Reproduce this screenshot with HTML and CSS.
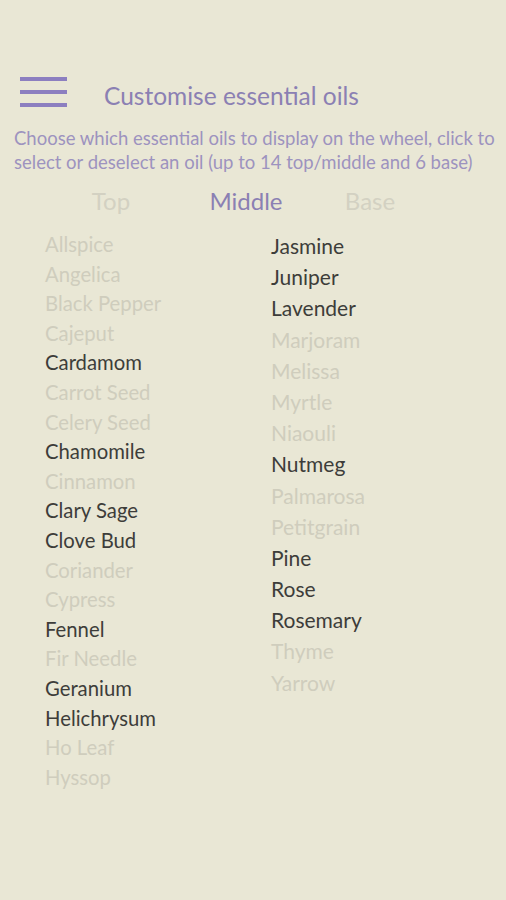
FILE: index.html
```html
<!DOCTYPE html>
<html lang="en">
<head>
  <meta charset="UTF-8" />
  <meta name="viewport" content="width=device-width, initial-scale=1.0" />
  <title>Customise essential oils</title>
  <link rel="stylesheet" href="styles.css">
</head>
<body>
  <div class="screen">
    <header class="bar">
      <span class="menu"><i></i><i></i><i></i></span>
      <h1>Customise essential oils</h1>
    </header>
    <p class="intro">Choose which essential oils to display on the wheel, click to select or deselect an oil (up to 14 top/middle and 6 base)</p>
    <nav class="tabs">
      <a class="tab">Top</a>
      <a class="tab active">Middle</a>
      <a class="tab">Base</a>
    </nav>
    <div class="lists">
      <ul class="oils left">
        <li>Allspice</li>
        <li>Angelica</li>
        <li>Black Pepper</li>
        <li>Cajeput</li>
        <li class="on">Cardamom</li>
        <li>Carrot Seed</li>
        <li>Celery Seed</li>
        <li class="on">Chamomile</li>
        <li>Cinnamon</li>
        <li class="on">Clary Sage</li>
        <li class="on">Clove Bud</li>
        <li>Coriander</li>
        <li>Cypress</li>
        <li class="on">Fennel</li>
        <li>Fir Needle</li>
        <li class="on">Geranium</li>
        <li class="on">Helichrysum</li>
        <li>Ho Leaf</li>
        <li>Hyssop</li>
      </ul>
      <ul class="oils right">
        <li class="on">Jasmine</li>
        <li class="on">Juniper</li>
        <li class="on">Lavender</li>
        <li>Marjoram</li>
        <li>Melissa</li>
        <li>Myrtle</li>
        <li>Niaouli</li>
        <li class="on">Nutmeg</li>
        <li>Palmarosa</li>
        <li>Petitgrain</li>
        <li class="on">Pine</li>
        <li class="on">Rose</li>
        <li class="on">Rosemary</li>
        <li>Thyme</li>
        <li>Yarrow</li>
      </ul>
    </div>
  </div>
</body>
</html>
```

FILE: styles.css
```css
body {
  margin: 0;
  background: #e9e7d5;
  font-family: Lato, "Open Sans", sans-serif;
}
.screen {
  padding-top: 73px;
}
.bar {
  display: flex;
  align-items: center;
  padding-left: 20px;
}
.menu {
  display: flex;
  flex-direction: column;
  gap: 9px;
  width: 47px;
}
.menu i {
  display: block;
  height: 4px;
  background: #8c7fc0;
}
.bar h1 {
  margin: 0 0 0 37px;
  padding-top: 8px;
  font-size: 24.5px;
  line-height: 30px;
  font-weight: normal;
  color: #8b80b3;
}
.intro {
  margin: 15px 8px 0 14px;
  font-size: 18.5px;
  line-height: 24px;
  color: #9d93bf;
}
.tabs {
  display: grid;
  grid-template-columns: 124px 146px 102px;
  margin-top: 12px;
  padding-left: 49px;
}
.tab {
  text-align: center;
  font-size: 24px;
  line-height: 30px;
  color: #d3d1c2;
}
.tab.active {
  color: #8b80b3;
}
.lists {
  display: flex;
  margin-top: 14px;
  padding-left: 45px;
}
.oils {
  list-style: none;
  margin: 0;
  padding: 0;
  color: #cfcdbd;
}
.oils.left {
  width: 226px;
  font-size: 20.3px;
}
.oils.right {
  font-size: 21px;
}
.oils.left li {
  height: 29.6px;
  line-height: 29.6px;
}
.oils.right li {
  height: 31.2px;
  line-height: 31.2px;
}
.oils li.on {
  color: #3d3d3a;
}
```
